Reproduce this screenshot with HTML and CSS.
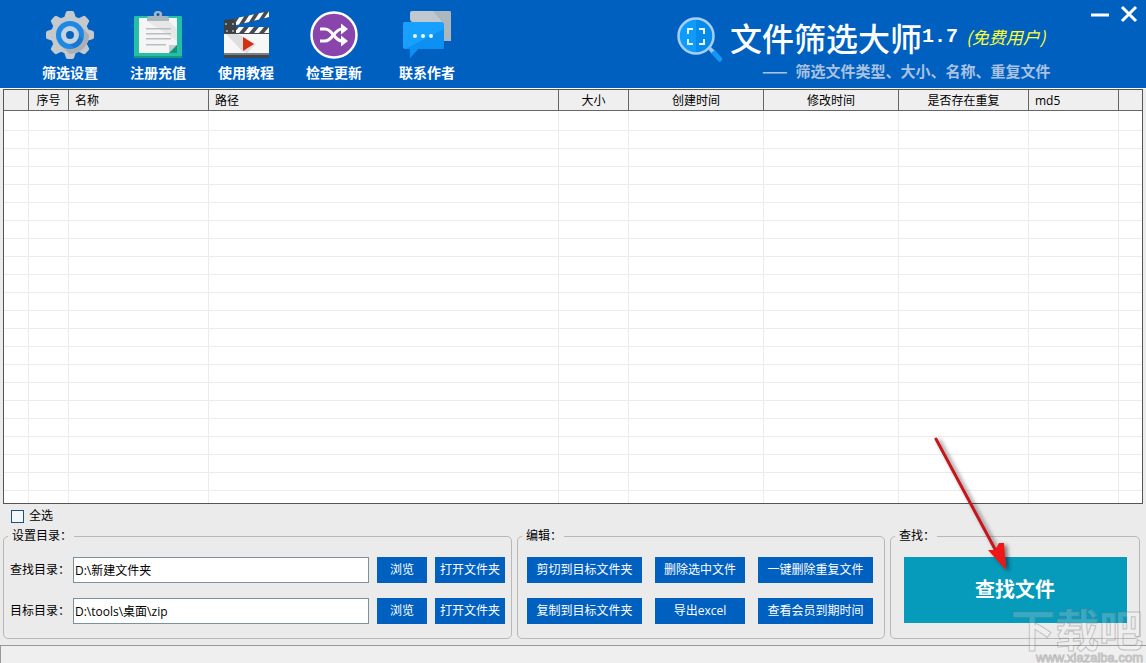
FILE: index.html
```html
<!DOCTYPE html>
<html lang="zh-CN">
<head>
    <meta charset="UTF-8">
    <meta name="viewport" content="width=device-width, initial-scale=1.0">
    <title>文件筛选大师1.7</title>
    <link rel="stylesheet" href="styles.css">
</head>
<body>
    <header class="topbar">
        <nav class="tools">
            <button type="button" class="tool">
                <svg width="48" height="48" viewBox="0 0 48 48">
                    <g fill="#c3c9cd">
                        <circle cx="24" cy="24" r="19"/>
                        <path id="tooth" d="M18 7 L20 1 Q20.5 0 22 0 H26 Q27.5 0 28 1 L30 7 Z"/>
                        <use href="#tooth" transform="rotate(45 24 24)"/>
                        <use href="#tooth" transform="rotate(90 24 24)"/>
                        <use href="#tooth" transform="rotate(135 24 24)"/>
                        <use href="#tooth" transform="rotate(180 24 24)"/>
                        <use href="#tooth" transform="rotate(225 24 24)"/>
                        <use href="#tooth" transform="rotate(270 24 24)"/>
                        <use href="#tooth" transform="rotate(315 24 24)"/>
                    </g>
                    <path d="M34 14 L43 24 A19 19 0 0 1 24 43 L14 34 Z" fill="#a9afb4"/>
                    <circle cx="24" cy="24" r="14" fill="#1e88e5"/>
                    <path d="M28 19 L37 28 A14 14 0 0 1 28 37 L19 28 Z" fill="#1976d2"/>
                    <circle cx="24" cy="24" r="6.5" fill="#0a62bd" stroke="#c3d3df" stroke-width="5"/>
                </svg>
                <span>筛选设置</span>
            </button>
            <button type="button" class="tool">
                <svg width="48" height="48" viewBox="0 0 48 48">
                    <rect x="0" y="5" width="48" height="42" rx="1" fill="#26bfa5"/>
                    <path d="M0 45 H48 V46 Q48 47 47 47 H1 Q0 47 0 46 Z" fill="#159980"/>
                    <path d="M5 7 H43 V34 L35 42 H5 Z" fill="#f5f5f5"/>
                    <path d="M13 10 H35 L43 18 V30 Z" fill="#e7e7e7"/>
                    <path d="M43 34 L35 42 V34 Z" fill="#c5ccd0"/>
                    <path d="M43 34 V42 H35 Z" fill="#16937e"/>
                    <path d="M13 10 V7 Q13 5 16 5 H20 Q19 0 24 0 Q29 0 28 5 H32 Q35 5 35 7 V10 Z" fill="#a8b6bf"/>
                    <circle cx="24" cy="3.5" r="1.5" fill="#0b5aa8"/>
                    <g fill="#b9bec1">
                        <rect x="12" y="17" width="25" height="1.5"/>
                        <rect x="12" y="22" width="25" height="1.5"/>
                        <rect x="12" y="27" width="25" height="1.5"/>
                        <rect x="12" y="33" width="20" height="1.5"/>
                    </g>
                </svg>
                <span>注册充值</span>
            </button>
            <button type="button" class="tool">
                <svg width="48" height="48" viewBox="0 0 48 48">
                    <path d="M2 10 L47 0 V6 L3 17 Z" fill="#454b50"/>
                    <path d="M12 14.5 L17 6.5 L22 5.5 L17 13.5 Z M22 12.2 L27 4.4 L32 3.3 L27 11 Z M32 9.7 L37 2.2 L42 1.2 L37 8.5 Z M42 7.3 L47 0.3 V6 Z" fill="#fff"/>
                    <rect x="2" y="16" width="45" height="7" fill="#454b50"/>
                    <path d="M12 22 L17 16 H22 L17 22 Z M22 22 L27 16 H32 L27 22 Z M32 22 L37 16 H42 L37 22 Z M42 22 L47 16 V22 Z" fill="#fff"/>
                    <path d="M2 9 L11 8 L14 12 V22 H2 Z" fill="#3b4044"/>
                    <g fill="#aeb4b8">
                        <circle cx="4" cy="13" r="1"/>
                        <circle cx="11" cy="13" r="1"/>
                        <circle cx="5" cy="20" r="1"/>
                        <circle cx="11" cy="20" r="1"/>
                    </g>
                    <rect x="2" y="23" width="45" height="19" fill="#f7f7f7"/>
                    <path d="M4 23 H16 L34 33 L25 42 L20 40 Z" fill="#dedede"/>
                    <rect x="2" y="42" width="45" height="5" fill="#40464a"/>
                    <rect x="2" y="42" width="45" height="2" fill="#788086"/>
                    <path d="M21 26 L32 33 L21 40 Z" fill="#d32f13"/>
                </svg>
                <span>使用教程</span>
            </button>
            <button type="button" class="tool">
                <svg width="48" height="48" viewBox="0 0 48 48">
                    <circle cx="24" cy="24" r="22.5" fill="#8a45ad" stroke="#fff" stroke-width="2.5"/>
                    <g fill="none" stroke="#fff" stroke-width="3">
                        <path d="M10 18 H15 C23 18 24 30 32 30 H34"/>
                        <path d="M10 30 H15 C23 30 24 18 32 18 H34"/>
                    </g>
                    <path d="M31 12.5 L38 18 L31 23.5 Z M31 24.5 L38 30 L31 35.5 Z" fill="#fff"/>
                </svg>
                <span>检查更新</span>
            </button>
            <button type="button" class="tool tool-contact">
                <svg width="48" height="48" viewBox="0 0 48 48">
                    <path d="M9 0 H46 Q48 0 48 2 V30 H39 L9 11 Q7 10 7 8 V2 Q7 0 9 0 Z" fill="#bfc8ce"/>
                    <path d="M30 0 H46 Q48 0 48 2 V30 H40 V12 Z" fill="#acb6bd"/>
                    <path d="M1 11 H38 Q41 11 41 13 V36 Q41 38 39 38 H15 L7 47 V38 H2 Q0 38 0 36 V13 Q0 11 1 11 Z" fill="#18a0ff"/>
                    <path d="M2 38 L41 18 V36 Q41 38 39 38 H15 L7 47 V38 Z" fill="#0c91f2"/>
                    <g fill="#e8f6ff">
                        <circle cx="12" cy="25" r="2"/>
                        <circle cx="20" cy="25" r="2"/>
                        <circle cx="28" cy="25" r="2"/>
                    </g>
                </svg>
                <span>联系作者</span>
            </button>
        </nav>

        <div class="brand">
            <svg width="46" height="46" viewBox="0 0 46 46">
                <path d="M31 32 L34 30 L38 34 L35 37 Z" fill="#9ec9ee"/>
                <path d="M34 36 L38 33 L45 41 Q46 44 42 45 Z" fill="#1596f5"/>
                <circle cx="19" cy="19" r="17.5" fill="#0e9bfb" stroke="#a6cff2" stroke-width="2.5"/>
                <path d="M19 3 A16 16 0 0 1 19 35 Z" fill="#078ae9"/>
                <path d="M11 17 V12 H16 M22 12 H27 V17 M27 22 V27 H22 M16 27 H11 V22" fill="none" stroke="#e6f8ff" stroke-width="2"/>
            </svg>
            <div class="brand-text">
                <h1 class="title">文件筛选大师<span class="version">1.7</span><span class="edition">(免费用户)</span></h1>
                <p class="slogan"><span>——</span><span>筛选文件类型、大小、名称、重复文件</span></p>
            </div>
        </div>

        <div class="window-buttons">
            <button type="button" aria-label="最小化">
                <svg width="18" height="18" viewBox="0 0 18 18"><path d="M0 10 H18" stroke="#fff" stroke-width="3"/></svg>
            </button>
            <button type="button" aria-label="关闭">
                <svg width="18" height="18" viewBox="0 0 18 18"><path d="M2 2 L16 16 M16 2 L2 16" stroke="#fff" stroke-width="3"/></svg>
            </button>
        </div>
    </header>

    <main class="content">
        <div class="list">
            <table class="files">
                <colgroup>
                    <col class="col-mark">
                    <col class="col-no">
                    <col class="col-name">
                    <col>
                    <col class="col-size">
                    <col class="col-time">
                    <col class="col-time">
                    <col class="col-repeat">
                    <col class="col-md5">
                    <col class="col-end">
                </colgroup>
                <thead>
                    <tr>
                        <th></th>
                        <th class="center">序号</th>
                        <th>名称</th>
                        <th>路径</th>
                        <th class="center">大小</th>
                        <th class="center">创建时间</th>
                        <th class="center">修改时间</th>
                        <th class="center">是否存在重复</th>
                        <th>md5</th>
                        <th></th>
                    </tr>
                </thead>
                <tbody id="rows"></tbody>
            </table>
        </div>

        <div class="select-all">
            <input type="checkbox" id="all">
            <label for="all">全选</label>
        </div>

        <div class="panels">
            <fieldset class="panel">
                <legend>设置目录：</legend>
                <div class="rows">
                    <div class="path-row">
                        <label for="source">查找目录：</label>
                        <input type="text" id="source" value="D:\新建文件夹">
                        <button type="button" class="btn browse">浏览</button>
                        <button type="button" class="btn open">打开文件夹</button>
                    </div>
                    <div class="path-row">
                        <label for="target">目标目录：</label>
                        <input type="text" id="target" value="D:\tools\桌面\zip">
                        <button type="button" class="btn browse">浏览</button>
                        <button type="button" class="btn open">打开文件夹</button>
                    </div>
                </div>
            </fieldset>

            <fieldset class="panel">
                <legend>编辑：</legend>
                <div class="actions">
                    <button type="button" class="btn">剪切到目标文件夹</button>
                    <button type="button" class="btn">删除选中文件</button>
                    <button type="button" class="btn">一键删除重复文件</button>
                    <button type="button" class="btn">复制到目标文件夹</button>
                    <button type="button" class="btn">导出excel</button>
                    <button type="button" class="btn">查看会员到期时间</button>
                </div>
            </fieldset>

            <fieldset class="panel">
                <legend>查找：</legend>
                <button type="button" class="search">查找文件</button>
            </fieldset>
        </div>
    </main>

    <footer class="status"></footer>

    <!-- 指向查找按钮的箭头 -->
    <svg class="arrow" width="90" height="145" viewBox="0 0 90 145">
        <defs>
            <filter id="shadow" x="-20%" y="-20%" width="150%" height="150%">
                <feDropShadow dx="3" dy="2" stdDeviation="2" flood-color="#000" flood-opacity="0.5"/>
            </filter>
        </defs>
        <g filter="url(#shadow)">
            <path d="M11 8 L71 120" stroke="#c4171b" stroke-width="3" stroke-linecap="round"/>
            <path d="M81 139 L63 119 L70 119 L74 112 L79 112 Z" fill="#ee1515"/>
        </g>
    </svg>

    <div class="watermark">
        <span class="mark-name">下载吧</span>
        <span class="mark-url">www.xiazaiba.com</span>
    </div>

    <script>
        const rows = document.getElementById("rows");
        const columns = document.querySelectorAll(".files th").length;

        for (let i = 0; i < 60; i++) {
            const row = rows.insertRow();
            for (let j = 0; j < columns; j++) {
                row.insertCell();
            }
        }
    </script>
</body>
</html>
```
FILE: styles.css
```css
* {
    box-sizing: border-box;
}
body {
    margin: 0;
    height: 100vh;
    display: flex;
    flex-direction: column;
    position: relative;
    overflow: hidden;
    background: #ebebeb;
    color: #000;
    font-family: "Open Sans", "Noto Sans CJK SC", sans-serif;
    font-size: 12px;
    line-height: 16px;
}
button, input {
    font-family: inherit;
    font-size: inherit;
    line-height: inherit;
}
button {
    padding: 0;
    border: none;
    background: none;
    color: #fff;
    white-space: nowrap;
    cursor: pointer;
}

/* Header */
.topbar {
    display: flex;
    flex: none;
    height: 89px;
    padding: 0 8px 0 26px;
    border-bottom: 1px solid #fff;
    background: #0060c0;
    color: #fff;
}
.tools {
    display: flex;
    align-items: flex-start;
}
.tool {
    display: flex;
    flex-direction: column;
    align-items: center;
    gap: 4px;
    width: 88px;
    padding-top: 11px;
    font-size: 14px;
    line-height: 20px;
    font-weight: bold;
}
.tool-contact {
    margin-left: 5px;
}
.brand {
    display: flex;
    gap: 7px;
    margin-left: auto;
    padding-top: 17px;
}
.brand-text {
    width: 324px;
}
.title {
    display: flex;
    align-items: center;
    height: 40px;
    margin: 0;
    font-family: "Noto Sans CJK SC", sans-serif;
    font-size: 32px;
    font-weight: 500;
    line-height: 40px;
    white-space: nowrap;
}
.version {
    font-family: "Liberation Mono", monospace;
    font-size: 20px;
    font-weight: bold;
}
.edition {
    margin-left: 8px;
    color: #ffff32;
    font-size: 17px;
    font-style: italic;
    font-weight: normal;
}
.slogan {
    display: flex;
    gap: 8px;
    margin: 4px 0 0 32px;
    color: #a9c2e2;
    font-family: "Noto Sans CJK SC", sans-serif;
    font-size: 15px;
    font-weight: bold;
    line-height: 20px;
    white-space: nowrap;
}
.window-buttons {
    display: flex;
    align-items: flex-start;
    gap: 11px;
    margin-left: 37px;
    padding-top: 5px;
}
.window-buttons svg {
    display: block;
}

/* File list */
.content {
    display: flex;
    flex: 1;
    flex-direction: column;
    min-height: 0;
    padding: 0 3px 6px;
}
.list {
    flex: 1;
    min-height: 0;
    overflow: hidden;
    border: 1px solid #555;
    background: #fff;
}
.files {
    width: 100%;
    table-layout: fixed;
    border-collapse: separate;
    border-spacing: 0;
}
.files th {
    height: 21px;
    padding: 1px 6px 0;
    border-right: 1px solid #666;
    border-bottom: 1px solid #666;
    background: #efefef;
    font-weight: normal;
    text-align: left;
    white-space: nowrap;
}
.files th.center {
    padding: 1px 0 0;
    text-align: center;
}
.files td {
    height: 18px;
    padding: 0;
    border-right: 1px solid #ececec;
    border-bottom: 1px solid #ececec;
}
.files tr:first-child td {
    height: 20px;
}
.files th:last-child, .files td:last-child {
    border-right: none;
}
.col-mark {
    width: 25px;
}
.col-no {
    width: 40px;
}
.col-name {
    width: 140px;
}
.col-size {
    width: 70px;
}
.col-time {
    width: 135px;
}
.col-repeat {
    width: 130px;
}
.col-md5 {
    width: 90px;
}
.col-end {
    width: 23px;
}
.select-all {
    display: flex;
    align-items: center;
    gap: 5px;
    height: 24px;
    padding-left: 8px;
}
.select-all input {
    appearance: none;
    width: 13px;
    height: 13px;
    margin: 0;
    border: 1px solid #1d5180;
    background: #f4f8fa;
}
.select-all input:checked {
    background: #0060c0;
}

/* Panels */
.panels {
    display: grid;
    grid-template-columns: 1fr 368px 250px;
    gap: 5px;
    padding-right: 3px;
}
.panel {
    min-width: 0;
    margin: 0;
    padding: 13px 6px 14px;
    border: 1px solid #b8b8b8;
    border-radius: 5px;
}
.panel legend {
    margin-left: -2px;
    padding: 0 2px 0 4px;
}
.rows {
    display: grid;
    gap: 15px;
}
.path-row {
    display: flex;
    align-items: center;
}
.path-row label {
    width: 63px;
    white-space: nowrap;
}
.path-row input {
    flex: 1;
    min-width: 0;
    height: 26px;
    padding: 0 1px;
    border: 1px solid #7b919f;
    background: #fff;
}
.btn {
    height: 26px;
    background: #0060c0;
}
.btn:hover {
    background: #1472d2;
}
.browse {
    width: 50px;
    margin-left: 8px;
}
.open {
    width: 70px;
    margin-left: 8px;
}
.actions {
    display: grid;
    grid-template-columns: 115px 90px 115px;
    gap: 15px 13px;
    padding-left: 3px;
}
.search {
    display: block;
    width: 223px;
    height: 66px;
    margin: 0 auto;
    background: #069abb;
    font-size: 20px;
    font-weight: bold;
}
.status {
    flex: none;
    height: 18px;
    border-top: 1px solid #999;
    border-left: 1px solid #999;
    background: #efefef;
}

/* Overlays */
.arrow {
    position: absolute;
    right: 131px;
    bottom: 87px;
    pointer-events: none;
}
.watermark {
    position: absolute;
    right: 3px;
    bottom: 0;
    display: flex;
    flex-direction: column;
    align-items: flex-end;
    color: rgba(255, 255, 255, 0.2);
    -webkit-text-stroke: 1px rgba(120, 120, 120, 0.4);
    pointer-events: none;
}
.mark-name {
    font-size: 44px;
    font-weight: bold;
    line-height: 46px;
}
.mark-url {
    font-family: "Liberation Sans", sans-serif;
    font-size: 13px;
    line-height: 10px;
}
```
